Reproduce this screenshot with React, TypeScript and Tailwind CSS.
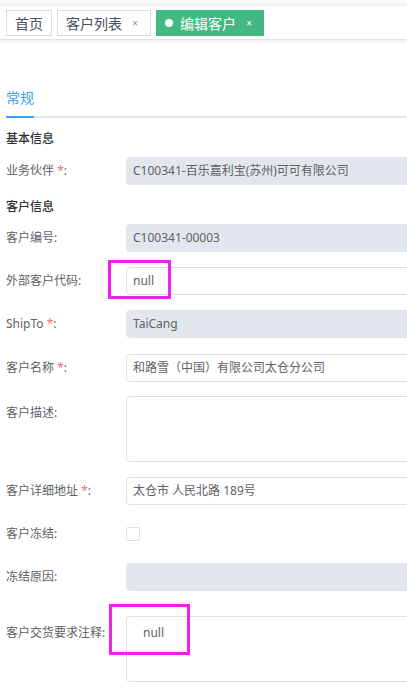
import React from "react";

const font = { fontFamily: '"Noto Sans", "Noto Sans CJK SC", sans-serif' };

function Label({ text, req }: { text: string; req?: boolean }) {
  return (
    <div className="w-[120px] shrink-0 text-[12px] text-[#606266] whitespace-nowrap">
      {text}
      {req && <span className="text-[#f56c6c]"> *</span>}:
    </div>
  );
}

function Input({ value, disabled }: { value?: string; disabled?: boolean }) {
  return (
    <div
      className={
        "w-[330px] h-[28px] shrink-0 rounded-[4px] border flex items-center px-[6px] text-[12px] text-[#606266] " +
        (disabled ? "bg-[#e2e6ed] border-[#e2e6ed]" : "bg-white border-[#dcdfe6]")
      }
    >
      {value}
    </div>
  );
}

function Row({ label, req, value, disabled, mb }: { label: string; req?: boolean; value?: string; disabled?: boolean; mb: string }) {
  return (
    <div className={"flex items-center " + mb}>
      <Label text={label} req={req} />
      <Input value={value} disabled={disabled} />
    </div>
  );
}

export default function App() {
  return (
    <div className="w-[407px] h-[691px] overflow-hidden bg-white relative" style={font}>
      <div className="h-[6px] bg-gradient-to-b from-white to-[#f1f2f5]" />
      <div className="h-[34px] border-b border-[#dfe2e8] shadow-[0_2px_3px_rgba(0,0,0,0.08)] flex items-start pt-[4px] pl-[6px] gap-[5px]">
        <div className="h-[26px] border border-[#d8dce5] px-[8px] flex items-center text-[14px] text-[#495060]">首页</div>
        <div className="h-[26px] w-[94px] shrink-0 border border-[#d8dce5] pl-[8px] flex items-center text-[14px] text-[#495060]">
          客户列表
          <span className="ml-[7px] w-[12px] text-center text-[10px] text-[#8a8f99]">×</span>
        </div>
        <div className="h-[26px] w-[108px] shrink-0 border border-[#42b983] bg-[#42b983] pl-[8px] flex items-center text-[14px] text-white">
          <span className="w-[8px] h-[8px] rounded-full bg-white mr-[7px] shrink-0" />
          编辑客户
          <span className="ml-[8px] w-[10px] text-center text-[10px]">×</span>
        </div>
      </div>

      <div className="px-[6px]">
        <div className="mt-[48px] relative">
          <div className="text-[14px] text-[#409eff] h-[20px] leading-[20px] w-[28px]">常规</div>
          <div className="mt-[8px] h-[2px] bg-[#e4e7ed] w-[420px]">
            <div className="h-[2px] w-[28px] bg-[#409eff]" />
          </div>
        </div>

        <div className="mt-[13px] text-[12px] text-[#303133] font-medium h-[16px] leading-[16px]">基本信息</div>
        <div className="mt-[10px]">
          <Row label="业务伙伴" req value="C100341-百乐嘉利宝(苏州)可可有限公司" disabled mb="mb-[14px]" />
        </div>
        <div className="text-[12px] text-[#303133] font-medium h-[16px] leading-[16px]">客户信息</div>
        <div className="mt-[9px]">
          <Row label="客户编号" value="C100341-00003" disabled mb="mb-[15px]" />
          <div className="flex items-center mb-[15px] relative">
            <Label text="外部客户代码" />
            <Input value="null" />
            <div className="absolute left-[102px] top-[-7px] w-[63px] h-[39px] border-[3px] border-[#f020f0]" />
          </div>
          <Row label="ShipTo" req value="TaiCang" disabled mb="mb-[16px]" />
          <Row label="客户名称" req value="和路雪（中国）有限公司太仓分公司" mb="mb-[14px]" />
          <div className="flex items-start mb-[15px]">
            <div className="pt-[8px]"><Label text="客户描述" /></div>
            <div className="w-[330px] h-[66px] shrink-0 rounded-[4px] border border-[#dcdfe6]" />
          </div>
          <Row label="客户详细地址" req value="太仓市 人民北路 189号" mb="mb-[15px]" />
          <div className="flex items-center h-[28px] mb-[15px]">
            <Label text="客户冻结" />
            <div className="w-[14px] h-[14px] rounded-[2px] border border-[#dcdfe6]" />
          </div>
          <Row label="冻结原因" disabled mb="mb-[25px]" />
          <div className="flex items-start relative">
            <div className="pt-[8px]"><Label text="客户交货要求注释" /></div>
            <div className="w-[330px] h-[66px] shrink-0 rounded-[4px] border border-[#dcdfe6] pl-[16px] pt-[7px] text-[12px] text-[#606266]">null</div>
            <div className="absolute left-[103px] top-[-12px] w-[81px] h-[51px] border-[3px] border-[#f020f0]" />
          </div>
        </div>
      </div>
    </div>
  );
}
